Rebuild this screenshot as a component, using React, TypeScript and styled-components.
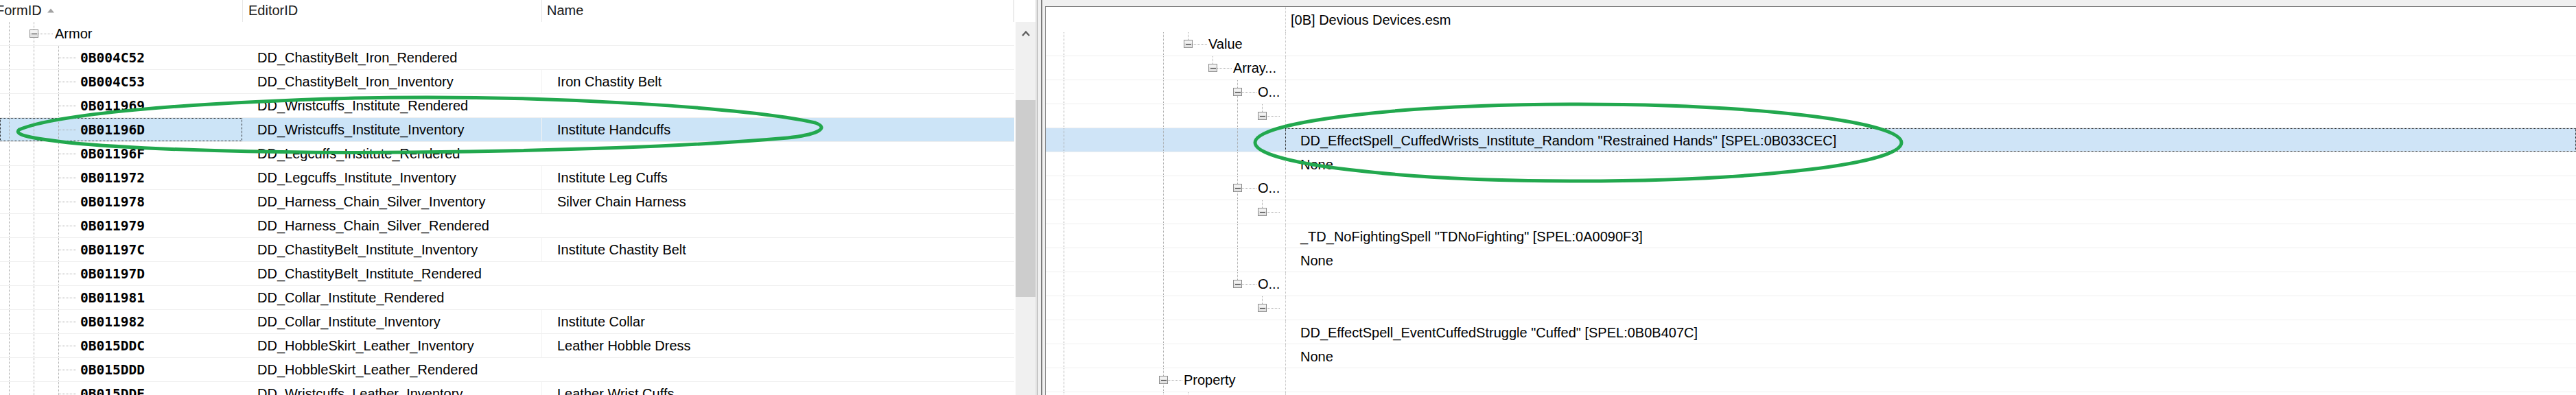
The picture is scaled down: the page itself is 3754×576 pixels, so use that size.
import React from "react";
import styled, { createGlobalStyle } from "styled-components";

const GlobalStyle = createGlobalStyle`
  html, body {
    margin: 0;
    padding: 0;
    background: #f0f0f0;
    overflow: hidden;
  }
  body {
    font-family: "Liberation Sans", Arial, sans-serif;
    font-size: 20px;
    color: #000;
  }
`;

const Window = styled.div`
  position: relative;
  display: flex;
  width: 3754px;
  height: 576px;
  overflow: hidden;
`;

/* ---------- record list (left) ---------- */

const RecordPane = styled.div`
  display: flex;
  width: 1509px;
  flex-shrink: 0;
  background: #fff;
`;

const RecordList = styled.div`
  width: 1478px;
  flex-shrink: 0;
  overflow: hidden;
`;

const ListHeader = styled.div`
  display: grid;
  grid-template-columns: 353px 436px 1fr;
  height: 32px;
  border-right: 1px solid #d6d6d6;
  box-sizing: border-box;
`;

const HeaderCell = styled.div<{ $pad: number; $divider?: boolean }>`
  display: flex;
  align-items: center;
  gap: 8px;
  padding-left: ${(p) => p.$pad}px;
  padding-bottom: 2px;
  border-left: ${(p) => (p.$divider ? "1px solid #e6e6e6" : "none")};
  color: #1a1a1a;
  white-space: nowrap;
  overflow: hidden;
`;

const SortLabel = styled.span`
  margin-left: -6px;
`;

const ListRow = styled.div<{ $selected?: boolean }>`
  display: grid;
  grid-template-columns: 353px 436px 1fr;
  height: 35px;
  box-sizing: border-box;
  border-bottom: 1px solid #efefef;
  background: ${(p) => (p.$selected ? "#cce4f7" : "#fff")};
`;

const TreeCell = styled.div<{ $focus?: boolean }>`
  display: flex;
  align-items: center;
  white-space: nowrap;
  overflow: hidden;
  outline: ${(p) => (p.$focus ? "1px dotted #1e1e1e" : "none")};
  outline-offset: -1px;
`;

const TextCell = styled.div<{ $divider?: boolean }>`
  display: flex;
  align-items: center;
  padding-left: 22px;
  white-space: nowrap;
  overflow: hidden;
  border-left: ${(p) => (p.$divider ? "1px solid #f3f3f3" : "none")};
`;

const FormId = styled.span`
  font-family: "DejaVu Sans Mono", "Liberation Mono", monospace;
  font-weight: bold;
  font-size: 19.5px;
`;

const ScrollColumn = styled.div`
  width: 31px;
  display: flex;
  flex-direction: column;
`;

const ScrollCap = styled.div`
  height: 32px;
  background: #fff;
`;

const ScrollTrack = styled.div`
  flex: 1;
  margin-left: 2px;
  background: #f0f0f0;
  display: flex;
  flex-direction: column;
`;

const ScrollArrow = styled.div`
  height: 33px;
  display: flex;
  align-items: center;
  justify-content: center;
`;

const ScrollThumb = styled.div`
  margin-top: 81px;
  height: 287px;
  background: #cdcdcd;
`;

const Splitter = styled.div`
  width: 14px;
  flex-shrink: 0;
  background: linear-gradient(
    to right,
    #e2e2e2 0 2px,
    #a4a4a4 2px 3px,
    #f0f0f0 3px 8px,
    #7c7c7c 8px 10px,
    #f0f0f0 10px 14px
  );
`;

/* ---------- element view (right) ---------- */

const DetailPane = styled.div`
  flex: 1;
  margin-top: 9px;
  border-left: 1px solid #828282;
  border-top: 1px solid #828282;
  background: #fff;
  overflow: hidden;
`;

const DetailHeader = styled.div`
  display: grid;
  grid-template-columns: 349px 1fr;
  height: 37px;
`;

const DetailRow = styled.div<{ $selected?: boolean }>`
  display: grid;
  grid-template-columns: 349px 1fr;
  height: 35px;
  box-sizing: border-box;
  border-bottom: 1px solid #efefef;
  background: ${(p) => (p.$selected ? "#cfe4f7" : "#fff")};
`;

const LabelCell = styled.div`
  display: flex;
  align-items: center;
  white-space: nowrap;
  overflow: hidden;
`;

const ValueCell = styled.div<{ $pad: number; $focus?: boolean }>`
  display: flex;
  align-items: center;
  padding-left: ${(p) => p.$pad}px;
  padding-top: 2px;
  white-space: nowrap;
  overflow: hidden;
  border-left: 1px dotted #c2c2c2;
  outline: ${(p) => (p.$focus ? "1px dotted #1e1e1e" : "none")};
  outline-offset: -1px;
`;

const GuideSvg = styled.svg`
  flex-shrink: 0;
  display: block;
`;

const Annotations = styled.svg`
  position: absolute;
  left: 0;
  top: 0;
  pointer-events: none;
`;

/* ---------- tree guide lines ---------- */

interface GuideSpec {
  w: number;
  full?: number[];
  upper?: number[];
  lower?: number[];
  link?: [number, number];
  box?: number;
}

function Guides({ w, full = [], upper = [], lower = [], link, box }: GuideSpec) {
  const h = 34;
  const mid = 17;
  return (
    <GuideSvg width={w} height={h} viewBox={`0 0 ${w} ${h}`}>
      <g stroke="#a6a6a6" strokeWidth={1} strokeDasharray="1 1" shapeRendering="crispEdges">
        {full.map((x) => (
          <line key={`f${x}`} x1={x + 0.5} x2={x + 0.5} y1={0} y2={h} />
        ))}
        {upper.map((x) => (
          <line key={`u${x}`} x1={x + 0.5} x2={x + 0.5} y1={0} y2={mid} />
        ))}
        {lower.map((x) => (
          <line key={`l${x}`} x1={x + 0.5} x2={x + 0.5} y1={mid} y2={h} />
        ))}
        {link && <line x1={link[0]} x2={link[1]} y1={mid + 0.5} y2={mid + 0.5} />}
      </g>
      {box !== undefined && (
        <g shapeRendering="crispEdges">
          <rect x={box - 5.5} y={mid - 5.5} width={12} height={11} fill="#e2e2e2" stroke="#8c8c8c" />
          <rect x={box - 5} y={mid - 5} width={11} height={4} fill="#f2f2f2" />
          <line x1={box - 3} x2={box + 5} y1={mid + 0.5} y2={mid + 0.5} stroke="#2f2f2f" />
        </g>
      )}
    </GuideSvg>
  );
}

/* ---------- data ---------- */

interface RecordItem {
  id: string;
  editorId: string;
  name: string;
}

const records: RecordItem[] = [
  { id: "0B004C52", editorId: "DD_ChastityBelt_Iron_Rendered", name: "" },
  { id: "0B004C53", editorId: "DD_ChastityBelt_Iron_Inventory", name: "Iron Chastity Belt" },
  { id: "0B011969", editorId: "DD_Wristcuffs_Institute_Rendered", name: "" },
  { id: "0B01196D", editorId: "DD_Wristcuffs_Institute_Inventory", name: "Institute Handcuffs" },
  { id: "0B01196F", editorId: "DD_Legcuffs_Institute_Rendered", name: "" },
  { id: "0B011972", editorId: "DD_Legcuffs_Institute_Inventory", name: "Institute Leg Cuffs" },
  { id: "0B011978", editorId: "DD_Harness_Chain_Silver_Inventory", name: "Silver Chain Harness" },
  { id: "0B011979", editorId: "DD_Harness_Chain_Silver_Rendered", name: "" },
  { id: "0B01197C", editorId: "DD_ChastityBelt_Institute_Inventory", name: "Institute Chastity Belt" },
  { id: "0B01197D", editorId: "DD_ChastityBelt_Institute_Rendered", name: "" },
  { id: "0B011981", editorId: "DD_Collar_Institute_Rendered", name: "" },
  { id: "0B011982", editorId: "DD_Collar_Institute_Inventory", name: "Institute Collar" },
  { id: "0B015DDC", editorId: "DD_HobbleSkirt_Leather_Inventory", name: "Leather Hobble Dress" },
  { id: "0B015DDD", editorId: "DD_HobbleSkirt_Leather_Rendered", name: "" },
  { id: "0B015DDE", editorId: "DD_Wristcuffs_Leather_Inventory", name: "Leather Wrist Cuffs" },
];

const SELECTED_ID = "0B01196D";

interface ElementItem {
  guide: GuideSpec;
  label?: string;
  value?: string;
  selected?: boolean;
}

const base = [26, 171];
const nodeGuide = (x: number, w: number, extra: Partial<GuideSpec> = {}): GuideSpec => ({
  w,
  full: base,
  upper: [x],
  box: x,
  link: [x + 7, w - 2],
  ...extra,
});

const elements: ElementItem[] = [
  { guide: nodeGuide(207, 237), label: "Value" },
  { guide: nodeGuide(243, 273), label: "Array..." },
  { guide: nodeGuide(279, 309, { lower: [279] }), label: "O..." },
  { guide: { w: 349, full: [...base, 279], upper: [315], box: 315, link: [322, 341] } },
  {
    guide: { w: 349, full: [...base, 279] },
    value: 'DD_EffectSpell_CuffedWrists_Institute_Random "Restrained Hands" [SPEL:0B033CEC]',
    selected: true,
  },
  { guide: { w: 349, full: [...base, 279] }, value: "None" },
  { guide: nodeGuide(279, 309, { full: [...base, 279], upper: [] }), label: "O..." },
  { guide: { w: 349, full: [...base, 279], upper: [315], box: 315, link: [322, 341] } },
  { guide: { w: 349, full: [...base, 279] }, value: '_TD_NoFightingSpell "TDNoFighting" [SPEL:0A0090F3]' },
  { guide: { w: 349, full: [...base, 279] }, value: "None" },
  { guide: nodeGuide(279, 309), label: "O..." },
  { guide: { w: 349, full: base, upper: [315], box: 315, link: [322, 341] } },
  { guide: { w: 349, full: base }, value: 'DD_EffectSpell_EventCuffedStruggle "Cuffed" [SPEL:0B0B407C]' },
  { guide: { w: 349, full: base }, value: "None" },
  { guide: { w: 201, full: base, box: 171, link: [178, 199] }, label: "Property" },
  { guide: { w: 349, full: [...base, 207] } },
];

/* ---------- page ---------- */

export default function App() {
  return (
    <>
      <GlobalStyle />
      <Window>
        <RecordPane>
          <RecordList>
            <ListHeader>
              <HeaderCell $pad={0}>
                <SortLabel>FormID</SortLabel>
                <svg width="10" height="7" viewBox="0 0 10 7">
                  <path d="M0 6.5 L5 0.5 L10 6.5 Z" fill="#a2a2a2" />
                </svg>
              </HeaderCell>
              <HeaderCell $pad={8} $divider>
                EditorID
              </HeaderCell>
              <HeaderCell $pad={7} $divider>
                Name
              </HeaderCell>
            </ListHeader>

            <ListRow>
              <TreeCell>
                <Guides w={80} full={[13, 49]} box={49} link={[56, 78]} />
                Armor
              </TreeCell>
              <TextCell />
              <TextCell />
            </ListRow>

            {records.map((r) => {
              const selected = r.id === SELECTED_ID;
              return (
                <ListRow key={r.id} $selected={selected}>
                  <TreeCell $focus={selected}>
                    <Guides w={117} full={[13, 49, 85]} link={[86, 112]} />
                    <FormId>{r.id}</FormId>
                  </TreeCell>
                  <TextCell>{r.editorId}</TextCell>
                  <TextCell $divider={r.name !== ""}>{r.name}</TextCell>
                </ListRow>
              );
            })}
          </RecordList>

          <ScrollColumn>
            <ScrollCap />
            <ScrollTrack>
              <ScrollArrow>
                <svg width="12" height="9" viewBox="0 0 12 9">
                  <path d="M1 8 L6 2.5 L11 8" fill="none" stroke="#5f5f5f" strokeWidth="2.4" />
                </svg>
              </ScrollArrow>
              <ScrollThumb />
            </ScrollTrack>
          </ScrollColumn>
        </RecordPane>

        <Splitter />

        <DetailPane>
          <DetailHeader>
            <LabelCell />
            <ValueCell $pad={7}>[0B] Devious Devices.esm</ValueCell>
          </DetailHeader>
          {elements.map((e, i) => (
            <DetailRow key={i} $selected={e.selected}>
              <LabelCell>
                <Guides {...e.guide} />
                {e.label}
              </LabelCell>
              <ValueCell $pad={21} $focus={e.selected}>
                {e.value}
              </ValueCell>
            </DetailRow>
          ))}
        </DetailPane>

        <Annotations width="3754" height="576" viewBox="0 0 3754 576">
          <g fill="none" stroke="#22a84e" strokeWidth="5" strokeLinecap="round">
            <path d="M 28 189 C 80 167, 260 150, 517 143 C 800 137, 1100 158, 1188 179 C 1212 188, 1185 197, 1148 201 C 1000 214, 800 220, 600 222 C 400 224, 200 218, 100 208 C 50 202, 18 197, 28 189 Z" />
            <ellipse cx="2300" cy="208" rx="471" ry="56" />
          </g>
        </Annotations>
      </Window>
    </>
  );
}
